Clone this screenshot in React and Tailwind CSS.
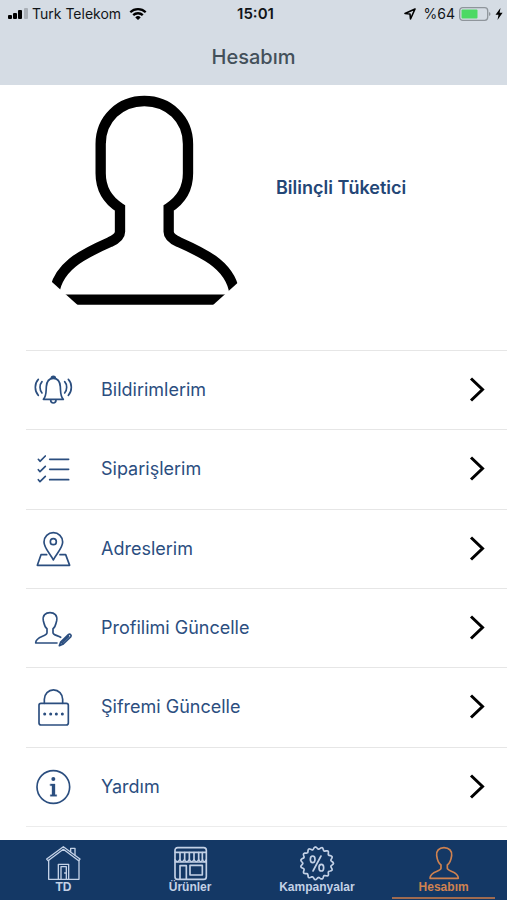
import React, { useState } from 'react';

const line = {
  fill: 'none',
  stroke: 'currentColor',
  strokeWidth: 5,
  strokeLinecap: 'round',
  strokeLinejoin: 'round',
};

const menuIcons = {
  bell: (
    <>
      <path d="M16 28C4 40 4 64 16 76M27 35C19 44 19 60 27 69M106 28C118 40 118 64 106 76M95 35C103 44 103 60 95 69" />
      <path d="M55 25a6 6 0 1 1 12 0" fill="currentColor" />
      <path d="M31 88C40 80 39 68 40 50C41 34 49 25 61 25S81 34 82 50C83 68 82 80 91 88Z" />
      <path d="M53 90a8 9 0 0 0 16 0" />
    </>
  ),
  list: (
    <path d="M16 31l5 6L37 21M16 62l5 6L37 52M16 92l5 6L37 82M50 31H107M50 61H107M50 92H107" />
  ),
  pin: (
    <>
      <path d="M61 93C54 76 33 58 33 39a28 28 0 0 1 56 0C89 58 68 76 61 93Z" />
      <circle cx="61" cy="38" r="9" />
      <path d="M41 77H24L13 109H110L98 77H81" />
    </>
  ),
  profile: (
    <>
      <path d="M72 105H8C8 84 42 86 42 74V62C34 57 34 48 31 38C28 22 38 14 51 14S74 22 71 38C68 48 68 57 60 62V74C60 81 73 82 83 88" />
      <path d="M79 113L83 102L106 80C111 76 117 82 113 87L91 108ZM83 102l8 6M87 105L107 85" />
    </>
  ),
  lock: (
    <>
      <path d="M34 49V37a27 28 0 0 1 55 0V49" />
      <rect x="18" y="49" width="88" height="65" rx="6" />
      <path d="M35 81h.1M53 81h.1M70 81h.1M88 81h.1" strokeWidth={9} />
    </>
  ),
  info: (
    <>
      <circle cx="61" cy="60" r="49" />
      <circle cx="61" cy="36" r="6" fill="currentColor" stroke="none" />
      <path d="M52 51H66V83H71V88H52V83H57V56H52Z" fill="currentColor" strokeWidth={1} />
    </>
  ),
};

// wavy edge of the discount badge
const badge = Array.from({ length: 121 }, (_, i) => {
  const a = (i / 120) * Math.PI * 2;
  const r = 46 + 3.5 * Math.cos(a * 15 + Math.PI / 2);
  return `${(54 + r * Math.sin(a)).toFixed(1)} ${(55 - r * Math.cos(a)).toFixed(1)}`;
}).join('L');

const tabIcons = {
  home: (
    <>
      <path d="M5 42L55 5L105 42L101 47L55 13L9 47Z" strokeWidth={4} />
      <path d="M11 46V103H102V46M40 103V58H71V103M48 103V65H64V103M64 84h-5M77 20V10H90V30" strokeWidth={4} />
    </>
  ),
  store: (
    <>
      <rect x="9" y="8" width="94" height="95" rx="8" />
      <path d="M10 22H102M10 51H102" />
      <path d="M24 23V44M38 23V44M52 23V44M66 23V44M80 23V44M91 23V44" />
      <path d="M9 44q7 12 14 0q7 12 14 0q7 12 15 0q7 12 14 0q7 12 14 0q6 12 12 0q5 12 11 0" strokeWidth={4} />
      <path d="M24 102V62H43V102M54 61H91V90H54Z" />
    </>
  ),
  percent: (
    <>
      <path d={`M${badge}Z`} />
      <path d="M66 33L42 78" />
      <ellipse cx="41" cy="43" rx="7" ry="10" />
      <ellipse cx="67" cy="68" rx="7" ry="10" />
    </>
  ),
  person: (
    <path d="M54 8C39 8 30 18 32 32C34 46 37 55 45 60V70C45 80 12 78 12 100H97C97 78 64 80 64 70V60C71 55 75 46 77 32C79 18 69 8 54 8Z" />
  ),
};

const menu = [
  { icon: 'bell', label: 'Bildirimlerim', href: '#bildirimler' },
  { icon: 'list', label: 'Siparişlerim', href: '#siparisler' },
  { icon: 'pin', label: 'Adreslerim', href: '#adresler' },
  { icon: 'profile', label: 'Profilimi Güncelle', href: '#profil' },
  { icon: 'lock', label: 'Şifremi Güncelle', href: '#sifre' },
  { icon: 'info', label: 'Yardım', href: '#yardim' },
];

const tabs = [
  { icon: 'home', label: 'TD' },
  { icon: 'store', label: 'Ürünler' },
  { icon: 'percent', label: 'Kampanyalar' },
  { icon: 'person', label: 'Hesabım' },
];

function StatusBar() {
  return (
    <div className="grid grid-cols-[1fr_auto_1fr] items-center h-7 pl-2 pr-1 text-[#111518] text-sm">
      <div className="flex items-center">
        <svg className="w-5 h-3 mr-1" viewBox="0 0 20 12">
          <rect x="0" y="7" width="4" height="4" rx="1" />
          <rect x="5" y="5" width="4" height="6" rx="1" />
          <rect x="10" y="2" width="4" height="9" rx="1" />
          <rect x="16" y="0" width="4" height="11" rx="1" fill="#a9afb6" />
        </svg>
        <span>Turk Telekom</span>
        <svg className="w-[18px] h-[14px] ml-2" viewBox="0 0 18 14" fill="none" stroke="black" strokeWidth="2.3">
          <path d="M1.3 5.2a11 11 0 0 1 15.4 0M4.2 8.2a6.9 6.9 0 0 1 9.6 0" />
          <path d="M9 13L6.3 10.4a3.9 3.9 0 0 1 5.4 0Z" fill="black" stroke="none" />
        </svg>
      </div>
      <span className="text-[15px] font-semibold">15:01</span>
      <div className="flex items-center justify-end">
        <svg className="w-3 h-3 mr-2" viewBox="0 0 12 12" fill="none" stroke="black" strokeWidth="1.6" strokeLinejoin="round">
          <path d="M11 1L1 5.5L6 6L6.5 11Z" />
        </svg>
        <span>%64</span>
        <svg className="w-8 h-[14px] ml-1" viewBox="0 0 32 14">
          <rect x="0.7" y="0.7" width="28" height="12.6" rx="3" fill="none" stroke="#8f959b" strokeWidth="1.3" />
          <rect x="2.5" y="2.5" width="16" height="9" rx="1" fill="#4cd964" />
          <path d="M30 5v4q1.5-.5 1.5-2T30 5Z" fill="#8f959b" />
        </svg>
        <svg className="w-2 h-3 ml-1" viewBox="0 0 8 12">
          <path d="M5.5 0L0.5 6.8H3.5L2.5 12L7.6 4.8H4.6Z" />
        </svg>
      </div>
    </div>
  );
}

function Avatar() {
  return (
    <svg className="w-[190px] h-[212px]" viewBox="60 30 570 636" role="img" aria-label="Profil resmi">
      <clipPath id="avatarClip">
        <path d="M60 30H630V587L545 664H147L60 586Z" />
      </clipPath>
      <path
        clipPath="url(#avatarClip)"
        fill="none"
        stroke="black"
        strokeWidth="31"
        d="M71 644C71 545 165 504 240 471Q270 457 270 440V369C232 345 212 310 212 265V177C212 102 270 48 343 48S474 102 474 177V265C474 310 454 345 416 369V440Q416 457 446 471C521 504 615 545 615 644Z"
      />
    </svg>
  );
}

function App() {
  const [active, setActive] = useState('Hesabım');

  return (
    <div className="flex flex-col min-h-screen bg-white text-[#2b4e7f] font-[Inter,'Liberation_Sans',sans-serif]">
      <header className="bg-[#d5dce4] h-[85px]">
        <StatusBar />
        <h1 className="text-center text-xl leading-[58px] font-medium text-[#43505a]">Hesabım</h1>
      </header>

      <main className="flex flex-col flex-1">
        <section className="flex items-start h-[265px] pt-[10px] pl-[50px]">
          <Avatar />
          <h2 className="ml-9 mt-[79px] text-lg leading-7 font-semibold text-[#234676]">Bilinçli Tüketici</h2>
        </section>

        <ul className="flex flex-col flex-1 ml-[26px] mb-[13px] border-b border-[#ececec]">
          {menu.map((item) => (
            <li key={item.label} className="flex flex-1 min-h-[79px] border-t border-[#e6e6e6]">
              <a href={item.href} className="flex flex-1 items-center pl-[7px] pr-[22px]">
                <svg className="w-10 h-10" viewBox="0 0 120 120" {...line}>
                  {menuIcons[item.icon]}
                </svg>
                <span className="flex-1 ml-7 text-lg">{item.label}</span>
                <svg className="w-4 h-[26px]" viewBox="0 0 16 26" fill="none" stroke="black" strokeWidth="3">
                  <path d="M2 1.5L13.5 12.5L2 23.5" />
                </svg>
              </a>
            </li>
          ))}
        </ul>
      </main>

      <nav className="grid grid-cols-4 h-[60px] bg-[#143865]">
        {tabs.map((tab) => (
          <button
            key={tab.label}
            type="button"
            onClick={() => setActive(tab.label)}
            className={`flex flex-col items-center pt-[5px] ${
              tab.label === active ? 'text-[#cf8250]' : 'text-[#c3d1e6]'
            }`}
          >
            <svg className="w-9 h-9" viewBox="0 0 108 108" {...line}>
              {tabIcons[tab.icon]}
            </svg>
            <span className="text-[12px] leading-3 font-bold font-['Liberation_Sans',sans-serif]">{tab.label}</span>
            {tab.label === active && <span className="self-stretch h-[2px] mx-3 mt-1 bg-[#a06b50]" />}
          </button>
        ))}
      </nav>
    </div>
  );
}

export default App;
